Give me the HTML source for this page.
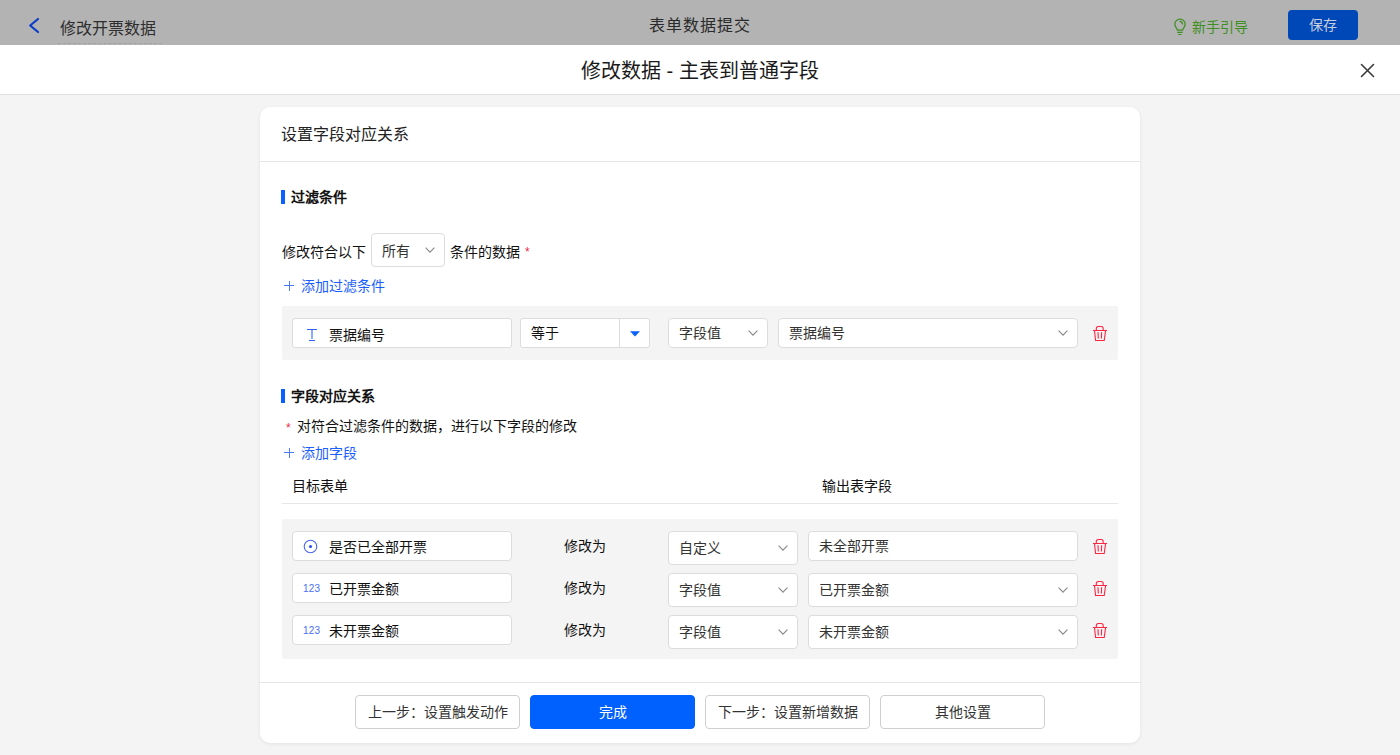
<!DOCTYPE html>
<html lang="zh-CN"><head><meta charset="utf-8">
<style>
*{box-sizing:border-box;margin:0;padding:0}
html,body{width:1400px;height:755px;overflow:hidden}
body{font-family:"Liberation Sans",sans-serif;font-size:14px;color:#111;background:#f4f4f4;position:relative}
.a{position:absolute;white-space:nowrap}
.t{line-height:20px}
#hdr{left:0;top:0;width:1400px;height:45px;background:#b3b3b3}
#mh{left:0;top:45px;width:1400px;height:50px;background:#fff;border-bottom:1px solid #e0e0e0}
#card{left:260px;top:107px;width:880px;height:636px;background:#fff;border-radius:10px;box-shadow:0 1px 4px rgba(0,0,0,0.07)}
.box{position:absolute;background:#fff;border:1px solid #dcdcdc;border-radius:4px}
.gray{position:absolute;background:#f4f4f4;border-radius:2px}
.bar{position:absolute;width:4px;height:14px;background:#0a5fff}
.h{font-weight:bold}
.blue{color:#1a5eff}
.chev{position:absolute;width:10px;height:6px}
.trash{position:absolute;width:15px;height:16px}
.btn{position:absolute;top:695px;width:165px;height:34px;border:1px solid #cfcfcf;border-radius:4px;background:#fff;text-align:center;line-height:32px;color:#333}
</style></head><body>
<div id="hdr" class="a"></div>
<svg class="a" style="left:28px;top:16px" width="13" height="19" viewBox="0 0 13 19"><path d="M10 3 L2.2 9.5 L10 16" fill="none" stroke="#0c3ccc" stroke-width="2.2" stroke-linecap="round" stroke-linejoin="round"/></svg>
<div class="a" style="left:60px;top:19px;font-size:16px;line-height:20px;color:#2e2e2e">修改开票数据</div>
<div class="a" style="left:58px;top:43px;width:104px;border-top:1px dashed #a2a2a2;height:0"></div>
<div class="a" style="left:649px;top:16px;font-size:16px;letter-spacing:1px;line-height:20px;color:#2a2a2a">表单数据提交</div>
<svg class="a" style="left:1172px;top:16px" width="16" height="20" viewBox="0 0 16 20"><path d="M5.4 14.2C5.4 12.5 2.8 11.3 2.8 8.3A5.2 5.2 0 0 1 13.2 8.3C13.2 11.3 10.6 12.5 10.6 14.2Z" fill="none" stroke="#3f8f22" stroke-width="1.3" stroke-linejoin="round"/><path d="M5.2 16.4H10.6M6.2 18.5H9.4" stroke="#3f8f22" stroke-width="1.2"/><path d="M7.6 5.4A3.2 3.2 0 0 1 10.6 8.6" fill="none" stroke="#3f8f22" stroke-width="1.2"/></svg>
<div class="a" style="left:1192px;top:17px;line-height:20px;color:#3f8f22">新手引导</div>
<div class="a" style="left:1288px;top:10px;width:70px;height:30px;background:#0047b8;border-radius:4px;color:#c8cfdc;text-align:center;line-height:30px">保存</div>

<div id="mh" class="a"></div>
<div class="a" style="left:581px;top:58px;font-size:20px;line-height:26px;color:#1a1a1a">修改数据 - 主表到普通字段</div>
<svg class="a" style="left:1360px;top:63px" width="15" height="15" viewBox="0 0 15 15"><path d="M1.5 1.5L13.5 13.5M13.5 1.5L1.5 13.5" stroke="#3a3a3a" stroke-width="1.6" stroke-linecap="round"/></svg>

<div id="card" class="a"></div>
<div class="a t" style="left:281px;top:125px;font-size:16px;color:#222">设置字段对应关系</div>
<div class="a" style="left:260px;top:161px;width:880px;height:1px;background:#e6e6e6"></div>

<div class="bar" style="left:281px;top:190px"></div>
<div class="a t h" style="left:291px;top:187px">过滤条件</div>

<div class="a t" style="left:282px;top:242px">修改符合以下</div>
<div class="box" style="left:371px;top:233px;width:74px;height:34px"></div>
<div class="a t" style="left:382px;top:241px;color:#333">所有</div>
<svg class="chev" style="left:425px;top:247px" viewBox="0 0 10 6"><path d="M.6 .6L5 5.2L9.4 .6" fill="none" stroke="#8a8a8a" stroke-width="1.15"/></svg>
<div class="a t" style="left:450px;top:242px">条件的数据</div>
<div class="a" style="left:525px;top:246px;color:#f0284a;font-size:12px;line-height:12px">*</div>

<svg class="a" style="left:284px;top:281px" width="10" height="10" viewBox="0 0 10 10"><path d="M0 4.5H10M5.5 0V10" stroke="#4a78ff" stroke-width="1"/></svg>
<div class="a t blue" style="left:301px;top:276px">添加过滤条件</div>

<div class="gray" style="left:282px;top:306px;width:836px;height:54px"></div>
<div class="box" style="left:292px;top:318px;width:220px;height:30px;border-radius:3px"></div>
<svg class="a" style="left:307px;top:328px" width="10" height="14" viewBox="0 0 10 14"><path d="M0 1.5H10M5 1.5V11M2 12.5H8" fill="none" stroke="#2f62ff" stroke-width="1.1"/></svg>
<div class="a t" style="left:329px;top:325px">票据编号</div>
<div class="box" style="left:520px;top:318px;width:130px;height:30px;border-radius:3px"></div>
<div class="a" style="left:619px;top:319px;width:1px;height:28px;background:#dcdcdc"></div>
<div class="a t" style="left:531px;top:323px">等于</div>
<svg class="a" style="left:630px;top:331px" width="10" height="6" viewBox="0 0 10 6"><path d="M0 .2H10L5 5.6Z" fill="#0a5fff"/></svg>
<div class="box" style="left:668px;top:318px;width:100px;height:30px"></div>
<div class="a t" style="left:679px;top:323px;color:#333">字段值</div>
<svg class="chev" style="left:748px;top:330px" viewBox="0 0 10 6"><path d="M.6 .6L5 5.2L9.4 .6" fill="none" stroke="#8a8a8a" stroke-width="1.15"/></svg>
<div class="box" style="left:778px;top:318px;width:300px;height:30px"></div>
<div class="a t" style="left:789px;top:323px;color:#333">票据编号</div>
<svg class="chev" style="left:1058px;top:330px" viewBox="0 0 10 6"><path d="M.6 .6L5 5.2L9.4 .6" fill="none" stroke="#8a8a8a" stroke-width="1.15"/></svg>
<svg class="a" style="left:1092px;top:325px" width="16" height="17" viewBox="0 0 16 17"><path d="M1 5.5H15M4.3 5.5V3.6Q4.3 1.5 6.3 1.5H9.2Q11.2 1.5 11.2 3.6V5.5M2.5 5.5L3.6 15.5H12.2L13.6 5.5M6 7.2L6.3 13.5M9.6 7.2L9.4 13.5" fill="none" stroke="#ff2442" stroke-width="1.1"/></svg>

<div class="bar" style="left:281px;top:389px"></div>
<div class="a t h" style="left:291px;top:386px">字段对应关系</div>
<div class="a" style="left:286px;top:422px;color:#f0284a;font-size:12px;line-height:12px">*</div>
<div class="a t" style="left:297px;top:416px">对符合过滤条件的数据，进行以下字段的修改</div>
<svg class="a" style="left:284px;top:448px" width="10" height="10" viewBox="0 0 10 10"><path d="M0 4.5H10M5.5 0V10" stroke="#4a78ff" stroke-width="1"/></svg>
<div class="a t blue" style="left:301px;top:443px">添加字段</div>

<div class="a t" style="left:292px;top:476px">目标表单</div>
<div class="a t" style="left:822px;top:476px">输出表字段</div>
<div class="a" style="left:282px;top:503px;width:836px;height:1px;background:#e6e6e6"></div>

<div class="gray" style="left:282px;top:519px;width:836px;height:140px"></div>
<div class="box" style="left:292px;top:531px;width:220px;height:30px"></div>
<svg class="a" style="left:303px;top:539px" width="15" height="15" viewBox="0 0 15 15"><circle cx="7.5" cy="7.5" r="6.3" fill="none" stroke="#4a64f0" stroke-width="1.1"/><circle cx="7.5" cy="7.5" r="1.6" fill="#2a50f0"/></svg>
<div class="a t" style="left:329px;top:537px">是否已全部开票</div>
<div class="a t" style="left:564px;top:536px">修改为</div>
<div class="box" style="left:668px;top:531px;width:130px;height:34px"></div>
<div class="a t" style="left:679px;top:538px;color:#333">自定义</div>
<svg class="chev" style="left:778px;top:545px" viewBox="0 0 10 6"><path d="M.6 .6L5 5.2L9.4 .6" fill="none" stroke="#8a8a8a" stroke-width="1.15"/></svg>
<div class="box" style="left:808px;top:531px;width:270px;height:30px"></div>
<div class="a t" style="left:819px;top:536px;color:#333">未全部开票</div>
<svg class="a" style="left:1092px;top:538px" width="16" height="17" viewBox="0 0 16 17"><path d="M1 5.5H15M4.3 5.5V3.6Q4.3 1.5 6.3 1.5H9.2Q11.2 1.5 11.2 3.6V5.5M2.5 5.5L3.6 15.5H12.2L13.6 5.5M6 7.2L6.3 13.5M9.6 7.2L9.4 13.5" fill="none" stroke="#ff2442" stroke-width="1.1"/></svg>
<div class="box" style="left:292px;top:573px;width:220px;height:30px"></div>
<div class="a" style="left:303px;top:583px;font-size:10px;letter-spacing:0.2px;line-height:12px;color:#4a70f5">123</div>
<div class="a t" style="left:329px;top:579px">已开票金额</div>
<div class="a t" style="left:564px;top:578px">修改为</div>
<div class="box" style="left:668px;top:573px;width:130px;height:34px"></div>
<div class="a t" style="left:679px;top:580px;color:#333">字段值</div>
<svg class="chev" style="left:778px;top:587px" viewBox="0 0 10 6"><path d="M.6 .6L5 5.2L9.4 .6" fill="none" stroke="#8a8a8a" stroke-width="1.15"/></svg>
<div class="box" style="left:808px;top:573px;width:270px;height:34px"></div>
<div class="a t" style="left:819px;top:580px;color:#333">已开票金额</div>
<svg class="chev" style="left:1058px;top:587px" viewBox="0 0 10 6"><path d="M.6 .6L5 5.2L9.4 .6" fill="none" stroke="#8a8a8a" stroke-width="1.15"/></svg>
<svg class="a" style="left:1092px;top:580px" width="16" height="17" viewBox="0 0 16 17"><path d="M1 5.5H15M4.3 5.5V3.6Q4.3 1.5 6.3 1.5H9.2Q11.2 1.5 11.2 3.6V5.5M2.5 5.5L3.6 15.5H12.2L13.6 5.5M6 7.2L6.3 13.5M9.6 7.2L9.4 13.5" fill="none" stroke="#ff2442" stroke-width="1.1"/></svg>
<div class="box" style="left:292px;top:615px;width:220px;height:30px"></div>
<div class="a" style="left:303px;top:625px;font-size:10px;letter-spacing:0.2px;line-height:12px;color:#4a70f5">123</div>
<div class="a t" style="left:329px;top:621px">未开票金额</div>
<div class="a t" style="left:564px;top:620px">修改为</div>
<div class="box" style="left:668px;top:615px;width:130px;height:34px"></div>
<div class="a t" style="left:679px;top:622px;color:#333">字段值</div>
<svg class="chev" style="left:778px;top:629px" viewBox="0 0 10 6"><path d="M.6 .6L5 5.2L9.4 .6" fill="none" stroke="#8a8a8a" stroke-width="1.15"/></svg>
<div class="box" style="left:808px;top:615px;width:270px;height:34px"></div>
<div class="a t" style="left:819px;top:622px;color:#333">未开票金额</div>
<svg class="chev" style="left:1058px;top:629px" viewBox="0 0 10 6"><path d="M.6 .6L5 5.2L9.4 .6" fill="none" stroke="#8a8a8a" stroke-width="1.15"/></svg>
<svg class="a" style="left:1092px;top:622px" width="16" height="17" viewBox="0 0 16 17"><path d="M1 5.5H15M4.3 5.5V3.6Q4.3 1.5 6.3 1.5H9.2Q11.2 1.5 11.2 3.6V5.5M2.5 5.5L3.6 15.5H12.2L13.6 5.5M6 7.2L6.3 13.5M9.6 7.2L9.4 13.5" fill="none" stroke="#ff2442" stroke-width="1.1"/></svg>
<div class="a" style="left:260px;top:682px;width:880px;height:1px;background:#e6e6e6"></div>
<div class="btn" style="left:355px">上一步：设置触发动作</div>
<div class="btn" style="left:530px;background:#0061ff;border-color:#0061ff;color:#fff">完成</div>
<div class="btn" style="left:705px">下一步：设置新增数据</div>
<div class="btn" style="left:880px">其他设置</div>
</body></html>
